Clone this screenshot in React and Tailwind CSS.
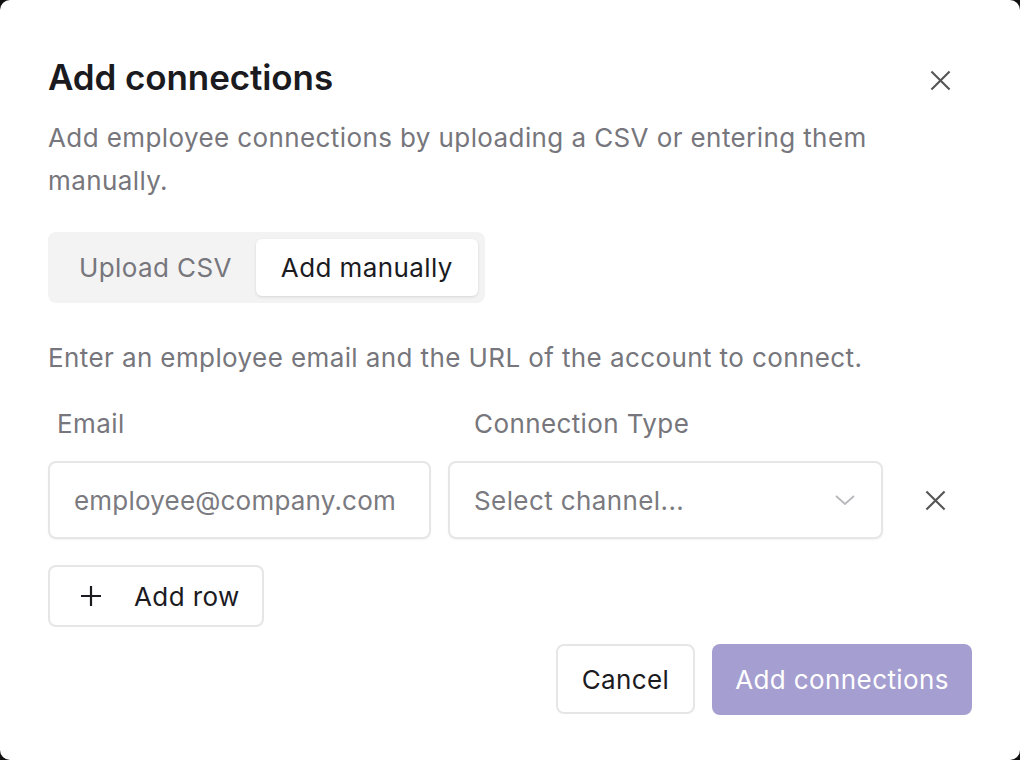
import React, { useState } from 'react'

const XIcon = ({ className }) => (
    <svg viewBox="0 0 24 24" fill="none" stroke="currentColor" strokeWidth="2" strokeLinecap="square" className={className}>
        <path d="M4 4l16 16M20 4L4 20" />
    </svg>
)

const App = () => {
    const [tab, setTab] = useState('manual');

    return (
        <div className="w-[1020px] h-[760px] bg-[#111] font-['Inter',sans-serif] tracking-[0.4px]">
            <div className="h-full bg-white rounded-[10px] px-[48px] pt-[59px] flex flex-col">
                {/* Header */}
                <div className="flex items-center justify-between">
                    <h1 className="text-[35px] leading-[36px] font-semibold text-[#1b1b1f] tracking-[-0.1px]">Add connections</h1>
                    <button className="mr-[19px] mt-[6px] text-[#555]">
                        <XIcon className="w-[25px] h-[25px]" />
                    </button>
                </div>
                <p className="mt-[21px] text-[26px] leading-[43px] text-[#76767c] max-w-[870px]">
                    Add employee connections by uploading a CSV or entering them manually.
                </p>

                {/* Tabs */}
                <div className="mt-[30px] self-start flex p-[7px] bg-[#f3f3f3] rounded-[8px]">
                    <button
                        onClick={() => setTab('csv')}
                        className={`h-[57px] px-[24px] text-[26px] rounded-[6px] ${tab === 'csv' ? 'bg-white text-[#1b1b1f] shadow-[0_1px_3px_rgba(0,0,0,0.12)]' : 'text-[#76767c]'}`}
                    >
                        Upload CSV
                    </button>
                    <button
                        onClick={() => setTab('manual')}
                        className={`h-[57px] px-[25px] text-[26px] rounded-[6px] ${tab === 'manual' ? 'bg-white text-[#1b1b1f] shadow-[0_1px_3px_rgba(0,0,0,0.12)]' : 'text-[#76767c]'}`}
                    >
                        Add manually
                    </button>
                </div>

                <p className="mt-[37px] text-[26px] leading-[36px] text-[#76767c]">
                    Enter an employee email and the URL of the account to connect.
                </p>

                {/* Row labels */}
                <div className="mt-[33px] flex text-[26px] leading-[30px] text-[#76767c]">
                    <span className="w-[426px] pl-[9px]">Email</span>
                    <span>Connection Type</span>
                </div>

                {/* Row */}
                <div className="mt-[22px] flex items-center">
                    <input
                        type="text"
                        placeholder="employee@company.com"
                        className="w-[383px] h-[78px] px-[24px] text-[26px] tracking-[0.2px] border-2 border-[#e6e6e6] rounded-[8px] outline-none shadow-[0_1px_2px_rgba(0,0,0,0.05)] placeholder:text-[#7a7a80]"
                    />
                    <div className="ml-[17px] w-[435px] h-[78px] pl-[24px] pr-[5px] flex items-center justify-between border-2 border-[#e6e6e6] rounded-[8px] shadow-[0_1px_2px_rgba(0,0,0,0.05)]">
                        <span className="text-[26px] text-[#7a7a80]">Select channel...</span>
                        <span className="w-[24px] flex justify-center mr-[19px]">
                            <svg viewBox="0 0 20 10" fill="none" stroke="#b8b8bc" strokeWidth="1.8" className="w-[20px] h-[10px]">
                                <path d="M1 1l9 8 9-8" />
                            </svg>
                        </span>
                    </div>
                    <button className="ml-[40px] text-[#555]">
                        <XIcon className="w-[25px] h-[25px]" />
                    </button>
                </div>

                <button className="mt-[26px] self-start w-[216px] h-[62px] pl-[29px] flex items-center gap-[31px] border-2 border-[#e6e6e6] rounded-[8px] text-[26px] text-[#1b1b1f]">
                    <svg viewBox="0 0 24 24" fill="none" stroke="currentColor" strokeWidth="2.2" className="w-[24px] h-[24px]">
                        <path d="M12 2v20M2 12h20" />
                    </svg>
                    Add row
                </button>

                {/* Footer */}
                <div className="mt-[17px] flex justify-end gap-[17px]">
                    <button className="w-[139px] h-[70px] border-2 border-[#e6e6e6] rounded-[8px] text-[26px] text-[#1b1b1f]">Cancel</button>
                    <button className="w-[260px] h-[71px] bg-[#a59ed0] rounded-[8px] text-[26px] text-white">Add connections</button>
                </div>
            </div>
        </div>
    )
}

export default App
